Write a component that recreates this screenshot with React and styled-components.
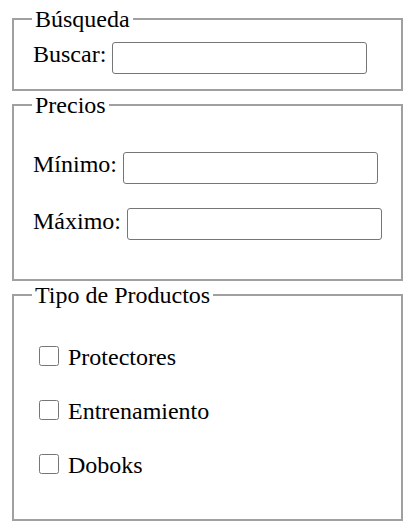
import React from 'react'
import styled, { createGlobalStyle } from 'styled-components'

const GlobalStyle = createGlobalStyle`
  body {
    margin: 0;
    background: #fff;
    color: #000;
    font-family: "Liberation Serif", "Times New Roman", serif;
    font-size: 24px;
  }
`

const Page = styled.form`
  padding: 5px 0 0 12px;
`

const Group = styled.fieldset`
  box-sizing: border-box;
  width: 391px;
  margin: 0;
  padding: 0.35em 0.75em 0.625em;
  border: 2px solid #a0a0a0;
  font-size: 24px;
`

const Title = styled.legend`
  padding: 0 3px;
  line-height: 28px;
`

const Row = styled.p`
  margin: ${props => (props.$flat ? '0' : '24px 0')};
  padding-left: 1px;
  line-height: ${props => (props.$check ? '30px' : 'normal')};
`

const TextInput = styled.input`
  box-sizing: border-box;
  width: 255px;
  height: 32px;
  padding: 1px 2px;
  border: 1px solid #767676;
  border-radius: 3px;
  font-family: Arial, "Liberation Sans", sans-serif;
  font-size: 13px;
  vertical-align: baseline;
`

const Check = styled.input`
  width: 20px;
  height: 20px;
  margin: 4px 3px 0 6px;
  vertical-align: top;
`

const products = ['Protectores', 'Entrenamiento', 'Doboks']

export default function App() {
  return (
    <>
      <GlobalStyle />
      <Page onSubmit={e => e.preventDefault()}>
        <Group>
          <Title>Búsqueda</Title>
          <Row $flat>
            <label>Buscar: <TextInput type="text" /></label>
          </Row>
        </Group>
        <Group>
          <Title>Precios</Title>
          <Row>
            <label>Mínimo: <TextInput type="text" /></label>
          </Row>
          <Row>
            <label>Máximo: <TextInput type="text" /></label>
          </Row>
        </Group>
        <Group>
          <Title>Tipo de Productos</Title>
          {products.map(name => (
            <Row key={name} $check>
              <label><Check type="checkbox" /> {name}</label>
            </Row>
          ))}
        </Group>
      </Page>
    </>
  )
}
